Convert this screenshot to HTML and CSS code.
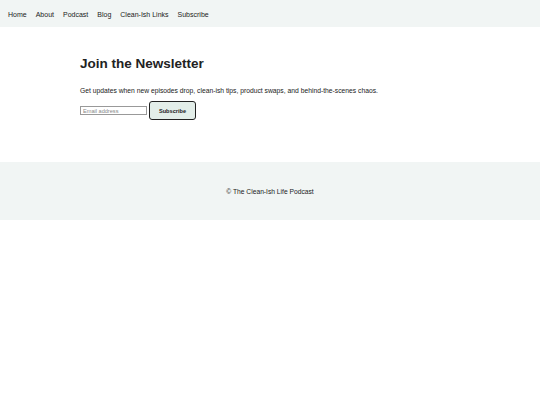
FILE: index.html
```html
<!DOCTYPE html>
<html lang="en">
<head>
<meta charset="utf-8">
<title>Join the Newsletter</title>
<link rel="stylesheet" href="styles.css">
</head>
<body>
<header class="site-header">
  <nav class="nav">
    <a href="#">Home</a>
    <a href="#">About</a>
    <a href="#">Podcast</a>
    <a href="#">Blog</a>
    <a href="#">Clean-Ish Links</a>
    <a href="#">Subscribe</a>
  </nav>
</header>
<main class="main">
  <h1 class="title">Join the Newsletter</h1>
  <p class="lead">Get updates when new episodes drop, clean-ish tips, product swaps, and behind-the-scenes chaos.</p>
  <form class="signup">
    <input class="email" type="email" placeholder="Email address">
    <button class="btn" type="button">Subscribe</button>
  </form>
</main>
<footer class="site-footer">
  <p>© The Clean-Ish Life Podcast</p>
</footer>
</body>
</html>
```

FILE: styles.css
```css
* { box-sizing: border-box; }
html, body { margin: 0; padding: 0; background: #fff; }
body {
  font-family: "Liberation Sans", Arial, sans-serif;
  color: #222;
}
.site-header {
  background: #f1f5f4;
  height: 27px;
  display: flex;
  align-items: center;
  padding: 1px 8px 0;
}
.nav {
  display: flex;
  gap: 9px;
}
.nav a {
  color: #222;
  text-decoration: none;
  font-size: 7px;
}
.main {
  padding: 29px 80px 42px;
}
.title {
  margin: 0;
  font-size: 13.5px;
  font-weight: bold;
  color: #222;
  line-height: 16px;
}
.lead {
  margin: 15px 0 0;
  font-size: 6.75px;
  line-height: 8px;
  color: #222;
}
.signup {
  display: flex;
  align-items: center;
  gap: 2px;
  margin-top: 6px;
}
.email {
  width: 67px;
  height: 9px;
  border: 1px solid #999;
  font-family: inherit;
  font-size: 5.6px;
  padding: 0 2px;
  margin: 0;
}
.email::placeholder { color: #888; }
.btn {
  width: 47px;
  height: 19px;
  border: 1px solid #222;
  border-radius: 3px;
  background: #e3eee9;
  font-family: inherit;
  font-size: 5.6px;
  font-weight: bold;
  color: #222;
  padding: 0;
}
.site-footer {
  background: #f1f5f4;
  height: 58px;
  display: flex;
  align-items: center;
  justify-content: center;
}
.site-footer p {
  margin: 0;
  font-size: 6.7px;
  color: #222;
}
```
